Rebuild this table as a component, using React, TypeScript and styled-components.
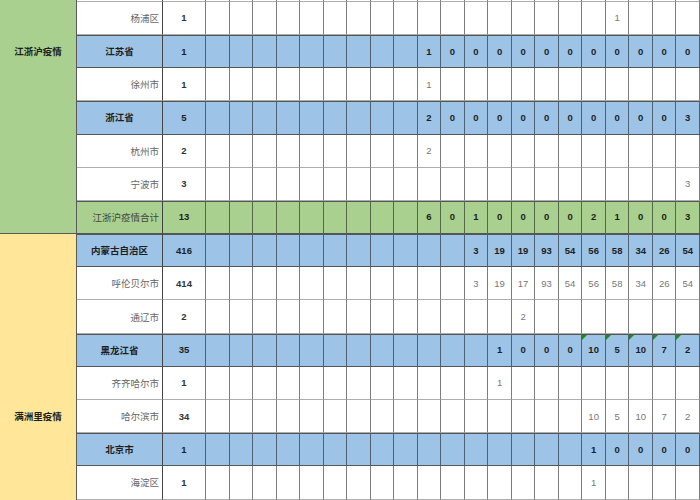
import React from "react";
import styled, { createGlobalStyle, css } from "styled-components";

type Kind = "prov" | "city" | "sum";
type Tone = "green" | "yellow";

interface Row {
  name: string;
  kind: Kind;
  total: string;
  vals: string[];
  flags?: number[];
}

interface Group {
  label: string;
  tone: Tone;
  rows: Row[];
}

const COLS = 21;

// spread values across the 21 day columns, starting at column `start` (1-based)
const fill = (start: number, values: string[]) =>
  Array.from({ length: COLS }, (_, i) => values[i - (start - 1)] ?? "");

const blank = (): Row => ({ name: "", kind: "city", total: "", vals: fill(1, []) });

const groups: Group[] = [
  {
    label: "江浙沪疫情",
    tone: "green",
    rows: [
      blank(),
      blank(),
      blank(),
      blank(),
      { name: "杨浦区", kind: "city", total: "1", vals: fill(18, ["1"]) },
      {
        name: "江苏省",
        kind: "prov",
        total: "1",
        vals: fill(10, ["1", "0", "0", "0", "0", "0", "0", "0", "0", "0", "0", "0"]),
      },
      { name: "徐州市", kind: "city", total: "1", vals: fill(10, ["1"]) },
      {
        name: "浙江省",
        kind: "prov",
        total: "5",
        vals: fill(10, ["2", "0", "0", "0", "0", "0", "0", "0", "0", "0", "0", "3"]),
      },
      { name: "杭州市", kind: "city", total: "2", vals: fill(10, ["2"]) },
      { name: "宁波市", kind: "city", total: "3", vals: fill(21, ["3"]) },
      {
        name: "江浙沪疫情合计",
        kind: "sum",
        total: "13",
        vals: fill(10, ["6", "0", "1", "0", "0", "0", "0", "2", "1", "0", "0", "3"]),
      },
    ],
  },
  {
    label: "满洲里疫情",
    tone: "yellow",
    rows: [
      {
        name: "内蒙古自治区",
        kind: "prov",
        total: "416",
        vals: fill(12, ["3", "19", "19", "93", "54", "56", "58", "34", "26", "54"]),
      },
      {
        name: "呼伦贝尔市",
        kind: "city",
        total: "414",
        vals: fill(12, ["3", "19", "17", "93", "54", "56", "58", "34", "26", "54"]),
      },
      { name: "通辽市", kind: "city", total: "2", vals: fill(14, ["2"]) },
      {
        name: "黑龙江省",
        kind: "prov",
        total: "35",
        vals: fill(13, ["1", "0", "0", "0", "10", "5", "10", "7", "2"]),
        flags: [17, 18, 19, 20, 21],
      },
      { name: "齐齐哈尔市", kind: "city", total: "1", vals: fill(13, ["1"]) },
      {
        name: "哈尔滨市",
        kind: "city",
        total: "34",
        vals: fill(17, ["10", "5", "10", "7", "2"]),
      },
      {
        name: "北京市",
        kind: "prov",
        total: "1",
        vals: fill(17, ["1", "0", "0", "0", "0"]),
      },
      { name: "海淀区", kind: "city", total: "1", vals: fill(17, ["1"]) },
      blank(),
      blank(),
      blank(),
    ],
  },
];

const App = () => {
  return (
    <>
      <GlobalStyle />
      <Viewport>
        <Sheet>
          {groups.map((g) => (
            <React.Fragment key={g.label}>
              <Category $tone={g.tone} $span={g.rows.length}>
                {g.label}
              </Category>
              {g.rows.map((r, ri) => (
                <React.Fragment key={ri}>
                  <NameCell $kind={r.kind}>{r.name}</NameCell>
                  <TotalCell $kind={r.kind}>{r.total}</TotalCell>
                  {r.vals.map((v, ci) => (
                    <DataCell
                      key={ci}
                      $kind={r.kind}
                      $flag={!!r.flags && r.flags.includes(ci + 1)}
                    >
                      {v}
                    </DataCell>
                  ))}
                </React.Fragment>
              ))}
            </React.Fragment>
          ))}
        </Sheet>
      </Viewport>
    </>
  );
};

const GlobalStyle = createGlobalStyle`
  html, body {
    margin: 0;
    background: #fff;
    overflow: hidden;
  }
  body {
    font-family: "Liberation Sans", "Noto Sans CJK SC", sans-serif;
  }
`;

const fills: Record<Kind, string> = {
  prov: "#9dc3e6",
  city: "#ffffff",
  sum: "#a9d08e",
};

// the window onto the sheet: rows above and below are scrolled out of view
const Viewport = styled.div`
  width: 700px;
  height: 500px;
  overflow: hidden;
`;

const Sheet = styled.div`
  width: 700px;
  margin-top: -131px;
  display: grid;
  grid-template-columns: 77px 86px 43px repeat(21, 1fr);
  grid-auto-rows: 33.2px;
  font-size: 9.5px;
`;

const Category = styled.div<{ $tone: Tone; $span: number }>`
  grid-row: span ${(p) => p.$span};
  background: ${(p) => (p.$tone === "green" ? "#a9d08e" : "#ffe699")};
  border-right: 1px solid #5a5a5a;
  border-bottom: 1px solid #5a5a5a;
  display: flex;
  align-items: center;
  justify-content: center;
  font-weight: bold;
  color: #1e1e1e;
`;

const cellBase = css<{ $kind: Kind }>`
  position: relative;
  box-sizing: border-box;
  display: flex;
  align-items: center;
  background: ${(p) => fills[p.$kind]};
  border-right: 1px solid
    ${(p) => (p.$kind === "city" ? "#7d7d7d" : "rgba(0, 0, 0, 0.5)")};
  border-bottom: 1px solid
    ${(p) => (p.$kind === "city" ? "#adadad" : "#555")};
  ${(p) =>
    p.$kind !== "city" &&
    css`
      box-shadow: inset 0 1px 0 #555;
    `}
`;

const NameCell = styled.div<{ $kind: Kind }>`
  ${cellBase};
  justify-content: ${(p) => (p.$kind === "prov" ? "center" : "flex-end")};
  padding-right: ${(p) => (p.$kind === "prov" ? "0" : "3px")};
  font-weight: ${(p) => (p.$kind === "prov" ? "bold" : "normal")};
  color: ${(p) =>
    p.$kind === "prov" ? "#1e1e1e" : p.$kind === "sum" ? "#444" : "#666"};
  border-right-color: #444;
`;

const TotalCell = styled.div<{ $kind: Kind }>`
  ${cellBase};
  justify-content: center;
  font-weight: bold;
  color: ${(p) => (p.$kind === "city" ? "#333" : "#1e1e1e")};
`;

const DataCell = styled.div<{ $kind: Kind; $flag: boolean }>`
  ${cellBase};
  justify-content: center;
  font-weight: ${(p) => (p.$kind === "city" ? "normal" : "bold")};
  color: ${(p) => (p.$kind === "city" ? "#777" : "#1e1e1e")};

  ${(p) =>
    p.$flag &&
    css`
      &::before {
        content: "";
        position: absolute;
        top: 1px;
        left: 0;
        border-top: 5px solid #1d8a1d;
        border-right: 5px solid transparent;
      }
    `}
`;

export default App;
